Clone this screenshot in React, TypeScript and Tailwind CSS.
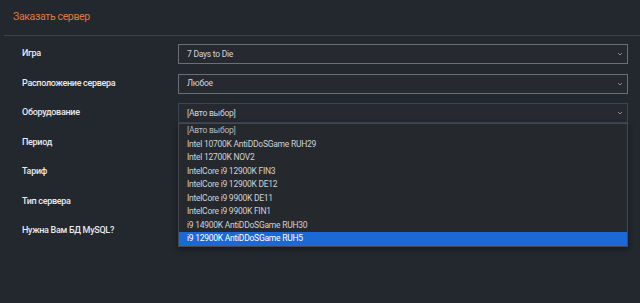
import React from "react";

const rows = [
  { label: "Игра", value: "7 Days to Die" },
  { label: "Расположение сервера", value: "Любое" },
  { label: "Оборудование", value: "[Авто выбор]", open: true },
  { label: "Период", value: "" },
  { label: "Тариф", value: "" },
  { label: "Тип сервера", value: "" },
  { label: "Нужна Вам БД MySQL?", value: "" },
];

const options = [
  "[Авто выбор]",
  "Intel 10700K AntiDDoSGame RUH29",
  "Intel 12700K NOV2",
  "IntelCore i9 12900K FIN3",
  "IntelCore i9 12900K DE12",
  "IntelCore i9 9900K DE11",
  "IntelCore i9 9900K FIN1",
  "i9 14900K AntiDDoSGame RUH30",
  "i9 12900K AntiDDoSGame RUH5",
];

function Chevron() {
  return (
    <svg width="6" height="4" viewBox="0 0 6 4" className="shrink-0">
      <path d="M1 1 L3 3 L5 1" fill="none" stroke="#85888d" strokeWidth="1" />
    </svg>
  );
}

export default function App() {
  return (
    <div className="w-[640px] h-[303px] bg-[#23272e] font-['Roboto',sans-serif] overflow-hidden">
      <div className="pl-[4px]">
        <div className="h-[36px] border-b border-[#3d4148] flex items-center pl-[9px] pb-[2px]">
          <span className="text-[10.5px] tracking-[-0.35px] text-[#e0793c]">Заказать сервер</span>
        </div>
      </div>

      <div className="relative pt-[8px] pl-[22px] pr-[12px] flex flex-col gap-[9.5px]">
        {rows.map((row, idx) => (
          <div key={idx} className="flex items-center h-[20px]">
            <div className="w-[156px] text-[9px] tracking-[-0.3px] font-medium text-[#e8eaee]">{row.label}</div>
            <div
              className={`flex-1 h-[20px] flex items-center justify-between pl-[8px] pr-[4px] bg-[#262a30] border ${
                row.open ? "border-[#3b4655]" : "border-[#6b6e74]"
              }`}
            >
              <span className="text-[8.5px] tracking-[-0.25px] text-[#d2d4d8]">{row.value}</span>
              <Chevron />
            </div>
          </div>
        ))}

        <div className="absolute left-[178px] top-[87px] w-[450px] border border-[#45494f] bg-[#25292e] shadow-[0_2px_6px_rgba(0,0,0,0.4)]">
          {options.map((opt, idx) => (
            <div
              key={idx}
              className={`h-[13.5px] flex items-center pl-[8px] text-[8.5px] tracking-[-0.25px] ${
                idx === options.length - 1
                  ? "bg-[#1b69d6] text-white"
                  : idx === 0
                  ? "text-[#b5b8bd]"
                  : "text-[#cfd1d5]"
              }`}
            >
              {opt}
            </div>
          ))}
        </div>
      </div>
    </div>
  );
}
